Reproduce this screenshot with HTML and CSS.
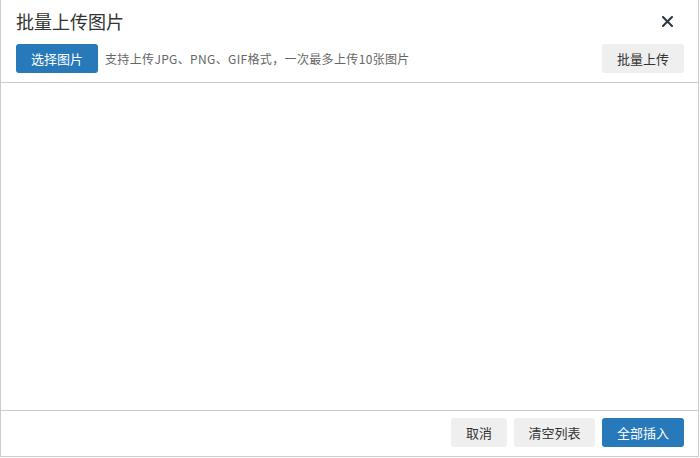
FILE: index.html
```html
<!DOCTYPE html>
<html lang="zh-CN">
<head>
    <meta charset="UTF-8">
    <meta name="viewport" content="width=device-width, initial-scale=1.0">
    <title>批量上传图片</title>
    <link rel="stylesheet" href="styles.css">
</head>
<body>
    <div class="dialog">
        <div class="head">
            <div class="title">批量上传图片</div>
            <a href="#" class="close">
                <svg width="11" height="11" viewBox="0 0 11 11"><path d="M1 1L10 10M10 1L1 10" stroke="#2b3440" stroke-width="2" stroke-linecap="round"/></svg>
            </a>
        </div>
        <div class="toolbar">
            <button class="btn blue">选择图片</button>
            <span class="tip">支持上传JPG、PNG、GIF格式，一次最多上传10张图片</span>
            <button class="btn grey right">批量上传</button>
        </div>
        <div class="list"></div>
        <div class="foot">
            <button class="btn grey cancel">取消</button>
            <button class="btn grey clear">清空列表</button>
            <button class="btn blue">全部插入</button>
        </div>
    </div>
</body>
</html>
```

FILE: styles.css
```css
*{margin: 0;padding: 0;box-sizing: border-box;}
body{
    background: #fff;
    font-family: "Noto Sans CJK SC", "Liberation Sans", sans-serif;
    color: #333;
}
.dialog{
    width: 699px;
    height: 457px;
    border: 1px solid #ccc;
    border-top: none;
    display: flex;
    flex-direction: column;
    background: #fff;
}
.head{
    display: flex;
    align-items: center;
    justify-content: space-between;
    height: 42px;
    padding: 0 25px 0 15px;
}
.title{font-size: 18px;color: #333;line-height: 24px;}
.close{display: flex;}
.toolbar{
    display: flex;
    align-items: center;
    padding: 2px 14px 9px 15px;
    border-bottom: 1px solid #ccc;
}
.tip{font-size: 12px;color: #666;margin-left: 7px;letter-spacing: 0.35px;}
.right{margin-left: auto;}
.btn{
    height: 29px;
    width: 82px;
    border: none;
    border-radius: 3px;
    font-family: inherit;
    font-size: 13px;
}
.blue{background: #2779b9;color: #fff;}
.grey{background: #efefef;color: #333;}
.list{flex: 1;}
.foot{
    display: flex;
    justify-content: flex-end;
    gap: 7px;
    padding: 7px 14px 9px;
    border-top: 1px solid #ccc;
}
.cancel{width: 56px;}
.clear{width: 81px;}
```
